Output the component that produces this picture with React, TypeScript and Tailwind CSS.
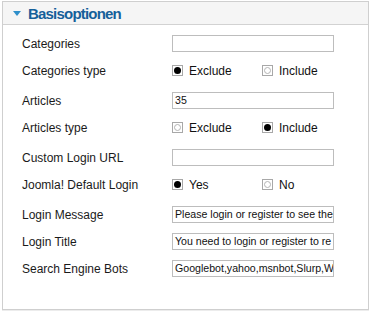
import React from "react";

function Radio({ checked, label }: { checked: boolean; label: string }) {
  return (
    <div className="flex items-center">
      <span className="w-[11px] h-[11px] border border-[#a8a8a8] bg-white flex items-center justify-center">
        {checked ? (
          <span className="w-[7px] h-[7px] rounded-full bg-black" />
        ) : (
          <span className="w-[7px] h-[7px] rounded-full border border-[#b4b4b4]" />
        )}
      </span>
      <span className="ml-[6px] text-[12px] text-[#111]">{label}</span>
    </div>
  );
}

function TextInput({ value }: { value: string }) {
  return (
    <div className="w-[162px] h-[17px] border border-[#bdbdbd] bg-white overflow-hidden whitespace-nowrap pl-[2px] text-[10.6px] leading-[15px] text-[#111]">
      {value}
    </div>
  );
}

function Row({
  label,
  children,
  extra,
}: {
  label: string;
  children: React.ReactNode;
  extra?: boolean;
}) {
  return (
    <div className={`flex items-center h-[27px] ${extra ? "mt-[3px]" : ""}`}>
      <div className="w-[150px] text-[12px] text-[#1a1a1a]">{label}</div>
      <div className="flex-1">{children}</div>
    </div>
  );
}

function RadioPair({
  a,
  b,
  first,
}: {
  a: string;
  b: string;
  first: boolean;
}) {
  return (
    <div className="flex items-center">
      <div className="w-[90px]">
        <Radio checked={first} label={a} />
      </div>
      <Radio checked={!first} label={b} />
    </div>
  );
}

export default function App() {
  return (
    <div
      className="w-[371px] h-[312px] bg-white pt-[1px] pl-[2px]"
      style={{ fontFamily: '"Liberation Sans", Arial, sans-serif' }}
    >
      <div className="w-[367px] h-[309px] border border-[#cfcfcf] shadow-[0_1px_0_#ececec] bg-white">
        <div className="h-[23px] bg-[#f5f5f5] border-b border-[#d2d2d2] flex items-center pl-[10px]">
          <svg width="8" height="6" viewBox="0 0 8 6" className="mt-[1px]">
            <polygon points="0,0 8,0 4,5" fill="#2f8fca" />
          </svg>
          <span className="ml-[7px] text-[15px] font-bold text-[#15609a] tracking-[-0.8px] leading-none">
            Basisoptionen
          </span>
        </div>
        <div className="pl-[19px] pt-[5px]">
          <Row label="Categories">
            <TextInput value="" />
          </Row>
          <Row label="Categories type">
            <RadioPair a="Exclude" b="Include" first={true} />
          </Row>
          <Row label="Articles" extra>
            <TextInput value="35" />
          </Row>
          <Row label="Articles type">
            <RadioPair a="Exclude" b="Include" first={false} />
          </Row>
          <Row label="Custom Login URL" extra>
            <TextInput value="" />
          </Row>
          <Row label="Joomla! Default Login">
            <RadioPair a="Yes" b="No" first={true} />
          </Row>
          <Row label="Login Message" extra>
            <TextInput value="Please login or register to see the" />
          </Row>
          <Row label="Login Title">
            <TextInput value="You need to login or register to re" />
          </Row>
          <Row label="Search Engine Bots">
            <TextInput value="Googlebot,yahoo,msnbot,Slurp,W" />
          </Row>
        </div>
      </div>
    </div>
  );
}
